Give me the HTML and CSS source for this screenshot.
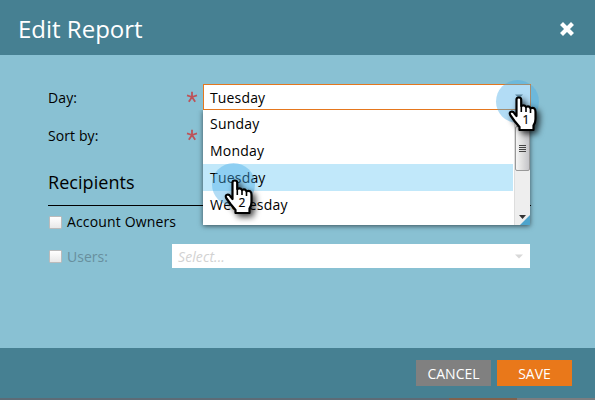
FILE: index.html
```html
<!DOCTYPE html>
<html lang="en">
<head>
<meta charset="utf-8">
<title>Edit Report</title>
<link rel="stylesheet" href="styles.css">
</head>
<body>
<svg class="defs" width="0" height="0" aria-hidden="true">
  <symbol id="hand" viewBox="0 0 30 37">
    <path d="M8.5 3.5Q8.5 1.5 10.8 1.5T13.2 3.5V10Q16.5 8.5 18 11Q21 9.5 22.5 12.2Q27.5 10.5 27.5 16V23Q27.5 27 25.5 29.5V34H11.5V31L6.5 25L2.2 19Q1 16.5 3 15.8Q5 15 6.5 17.5L8.5 20Z" fill="#fff" stroke="#000" stroke-width="2.2" stroke-linejoin="round"/>
    <path d="M13.3 10V16M18 11V16M22.5 12.2V17" fill="none" stroke="#000" stroke-width="1.6"/>
  </symbol>
</svg>
<div class="dialog">
  <header class="header">
    <h1 class="title">Edit Report</h1>
    <svg class="close" viewBox="0 0 14 14"><path d="M3 3L11 11M11 3L3 11" stroke="#fff" stroke-width="4.2" stroke-linecap="square"/></svg>
  </header>
  <main class="content">
    <div class="field">
      <span class="label">Day:</span>
      <svg class="required" viewBox="0 0 12 12"><path d="M6 6V.7M6 6L1 4.4M6 6L11 4.4M6 6L2.8 10.7M6 6L9.2 10.7" stroke="#bd5358" stroke-width="1.8"/></svg>
      <div class="combo">
        <span class="value">Tuesday</span>
        <svg class="arrow" viewBox="0 0 8 5"><path d="M0 .5H8L4 4.5Z" fill="#777"/></svg>
        <div class="menu">
          <ul class="options">
            <li>Sunday</li>
            <li>Monday</li>
            <li class="selected">Tuesday</li>
            <li>Wednesday</li>
          </ul>
          <div class="scrollbar">
            <div class="thumb"><i></i><i></i><i></i><i></i></div>
            <svg class="down" viewBox="0 0 8 4"><path d="M0 0H7L3.5 4Z" fill="#333"/></svg>
            <span class="corner"></span>
          </div>
        </div>
        <div class="pointer pointer-open"><svg><use href="#hand"/></svg><b>1</b></div>
        <div class="pointer pointer-pick"><svg><use href="#hand"/></svg><b>2</b></div>
      </div>
    </div>
    <div class="field">
      <span class="label">Sort by:</span>
      <svg class="required" viewBox="0 0 12 12"><path d="M6 6V.7M6 6L1 4.4M6 6L11 4.4M6 6L2.8 10.7M6 6L9.2 10.7" stroke="#bd5358" stroke-width="1.8"/></svg>
    </div>
    <h2 class="section">Recipients</h2>
    <div class="check-row owners"><span class="box"></span><span class="owners-label">Account Owners</span></div>
    <div class="check-row users">
      <span class="box"></span><span class="users-label">Users:</span>
      <div class="select"><span class="placeholder">Select...</span><svg class="arrow" viewBox="0 0 8 5"><path d="M0 .5H8L4 4.5Z" fill="#d8d8d8"/></svg></div>
    </div>
  </main>
  <footer class="footer">
    <span class="button">CANCEL</span>
    <span class="button save">SAVE</span>
  </footer>
  <div class="strip"></div>
</div>
</body>
</html>
```

FILE: styles.css
```css
* { box-sizing: border-box; }
body { margin: 0; font: 14px/20px "Open Sans", "Noto Sans", sans-serif; color: #000; }
.defs { position: absolute; }
.dialog { width: 595px; height: 400px; display: flex; flex-direction: column; overflow: hidden; background: #89c1d3; }
.header { height: 55px; flex: none; padding: 2px 21px 0 18px; display: flex; align-items: center; justify-content: space-between; background: #468092; }
.title { margin: 0; font-size: 24px; line-height: 32px; font-weight: 400; color: #fff; }
.close { width: 14px; height: 14px; }
.content { flex: 1; padding: 29px 64px 0 48px; }
.field { display: flex; align-items: center; height: 26px; margin-bottom: 12px; }
.label { width: 138px; padding-top: 2px; letter-spacing: .1px; }
.required { width: 12px; height: 12px; margin-right: 5px; }
.combo { position: relative; width: 328px; height: 26px; padding: 0 7px 0 6px; display: flex; align-items: center; justify-content: space-between; background: #fff; border: 1px solid #e5771e; }
.value { padding-top: 2px; letter-spacing: .15px; }
.arrow { width: 8px; height: 5px; }
.combo > .arrow { margin-top: -2px; }
.menu { position: absolute; z-index: 1; top: 25px; left: -1px; width: 327px; height: 115px; display: flex; background: #fff; box-shadow: 0 1px 5px rgba(0,0,0,.6); clip-path: inset(0 -10px -10px -10px); }
.options { flex: 1; margin: 0; padding: 0; list-style: none; letter-spacing: .2px; }
.options li { height: 27px; padding: 4px 7px; margin-right: 1px; }
.options .selected { background: #c1e8fa; }
.scrollbar { position: relative; width: 16px; padding-top: 16px; background: #eee; border-left: 1px solid #ddd; display: flex; flex-direction: column; align-items: center; }
.thumb { width: 15px; height: 45px; border: 1px solid #999; border-radius: 2px; background: linear-gradient(90deg, #f5f5f5, #ddd 50%, #c4c4c8); display: flex; flex-direction: column; align-items: center; justify-content: center; gap: 1px; }
.thumb i { width: 7px; height: 1px; background: #444; }
.down { width: 8px; height: 4px; margin-top: 44px; }
.corner { position: absolute; right: 0; bottom: 0; border-left: 10px solid transparent; border-bottom: 10px solid #4ea4cc; }
.pointer { position: absolute; z-index: 2; width: 43px; height: 43px; border-radius: 50%; background: rgba(71,172,231,.42); }
.pointer-open { left: 292px; top: -5px; }
.pointer-pick { left: 8px; top: 78px; }
.pointer svg { position: absolute; left: 12px; top: 16px; width: 30px; height: 37px; filter: drop-shadow(3px 3px 3px rgba(0,0,0,.75)); }
.pointer b { position: absolute; left: 25px; top: 32px; width: 10px; text-align: center; font: 12px/16px "Open Sans", sans-serif; -webkit-text-stroke: .2px #000; }
.section { height: 46px; margin: 0; padding-top: 10px; font-size: 18px; line-height: 24px; font-weight: 400; letter-spacing: .05px; border-bottom: 1px solid #000; }
.check-row { display: flex; align-items: center; padding-left: 1px; }
.box { width: 13px; height: 13px; margin-right: 5px; background: linear-gradient(#fff, #e8e8e8); border: 1px solid #bbb; border-radius: 1px; }
.owners { height: 32px; }
.owners-label { letter-spacing: .15px; }
.users { height: 24px; margin-top: 6px; }
.users-label { width: 105px; padding-top: 2px; color: #688f9d; }
.select { flex: 1; margin-right: 1px; height: 24px; padding: 0 7px 0 6px; display: flex; align-items: center; justify-content: space-between; background: #fff; color: #d2d2d2; }
.placeholder { padding-top: 2px; font-style: italic; letter-spacing: .1px; }
.footer { height: 50px; flex: none; display: flex; justify-content: flex-end; gap: 6px; padding: 12px 23px 0; background: #468092; }
.button { width: 75px; height: 26px; line-height: 27px; text-align: center; color: #fff; background: #808080; }
.save { background: #e9781a; }
.strip { height: 2px; flex: none; background: linear-gradient(90deg, #5d6b76 449px, #80624e 449px 517px, #7b7d80 517px); }
```
